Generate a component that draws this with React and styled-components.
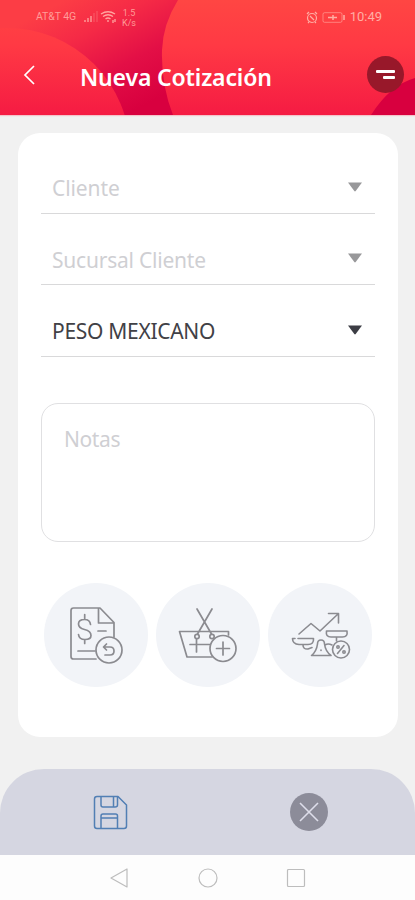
import React from "react";
import styled, { createGlobalStyle } from "styled-components";

const GlobalStyle = createGlobalStyle`
  * { box-sizing: border-box; }
  body { margin: 0; background: #f1f1f1; font-family: "Noto Sans", "Open Sans", sans-serif; }
  button { border: 0; padding: 0; background: none; font: inherit; }
  svg { display: block; flex: none; }
`;

const Screen = styled.main`
  width: 415px;
  height: 900px;
  display: flex;
  flex-direction: column;
  background: #f1f1f1;
  overflow: hidden;
`;

const Header = styled.header`
  position: relative;
  height: 115px;
  flex: none;
  overflow: hidden;
  box-shadow: 0 1px 1px #f3c4ca;
`;

const HeaderArt = styled.svg`
  position: absolute;
  inset: 0;
`;

const StatusBar = styled.div`
  position: relative;
  height: 34px;
  padding: 0 33px 0 36px;
  display: flex;
  align-items: center;
  color: #ff9c98;
  font: 11px/34px Roboto, sans-serif;
`;

const Carrier = styled.span`
  width: 48px;
  font-size: 10.5px;
  letter-spacing: -0.1px;
  white-space: nowrap;
`;

const Speed = styled.span`
  margin-left: 2px;
  font-size: 9px;
  line-height: 10px;
  text-align: center;
  padding-top: 1px;
`;

const StatusRight = styled.div`
  margin-left: auto;
  display: flex;
  align-items: center;
  gap: 4px;
  font-size: 13px;
  color: #ffaea4;
`;

const TitleBar = styled.div`
  position: relative;
  height: 81px;
  padding: 0 11px 0 22px;
  display: flex;
  align-items: center;
`;

const Title = styled.h1`
  margin: 5px 0 0 42px;
  color: #fff;
  font-size: 23px;
  line-height: 30px;
  font-weight: 600;
  letter-spacing: -0.15px;
  white-space: nowrap;
`;

const MenuButton = styled.button`
  width: 37px;
  height: 37px;
  margin-left: auto;
  border-radius: 50%;
  background: #98182a;
  display: grid;
  place-items: center;
`;

const Card = styled.section`
  width: 380px;
  height: 604px;
  margin: 18px 0 0 18px;
  padding: 9px 23px 0;
  border-radius: 22px;
  background: #fff;
  flex: none;
`;

const SelectField = styled.div`
  height: 71.5px;
  padding: 22px 12px 0 11px;
  border-bottom: 1px solid #d9d9da;
  display: flex;
  align-items: center;
  justify-content: space-between;
  color: ${(p) => (p.$filled ? "#414146" : "#cfcfd3")};
  font-size: 21px;
  line-height: 28px;
  letter-spacing: ${(p) => p.$tracking || "0px"};
`;

const Caret = styled.svg`
  margin-top: -3px;
  fill: ${(p) => (p.$filled ? "#3c3d44" : "#98989a")};
`;

const Notes = styled.div`
  height: 139px;
  margin-top: 46px;
  padding: 21px 22px;
  border: 1.5px solid #e0e0e2;
  border-radius: 17px;
  color: #cfcfd3;
  font-size: 21px;
  line-height: 28px;
  letter-spacing: -0.4px;
`;

const Actions = styled.div`
  margin: 41px 3px 0;
  display: flex;
  justify-content: space-between;
`;

const ActionButton = styled.button`
  width: 104px;
  height: 104px;
  border-radius: 50%;
  background: #f2f4f8;
`;

const ActionArt = styled.svg`
  fill: none;
  stroke: #8b8b90;
  stroke-width: ${(p) => p.$weight || 1.7};
  stroke-linejoin: round;
  stroke-linecap: round;
`;

const Footer = styled.footer`
  height: 86px;
  margin-top: 32px;
  padding: 0 87px 0 93px;
  border-radius: 44px 44px 0 0;
  background: #d5d6e1;
  display: flex;
  align-items: center;
  justify-content: space-between;
  flex: none;
`;

const CancelButton = styled.button`
  width: 38px;
  height: 38px;
  border-radius: 50%;
  background: #8c8c99;
  display: grid;
  place-items: center;
`;

const SystemNav = styled.nav`
  height: 46px;
  padding: 0 109px;
  display: flex;
  align-items: center;
  justify-content: space-between;
  background: #fdfdfd;
`;

const NavGlyph = styled.svg`
  fill: none;
  stroke: #bdbdbd;
  stroke-width: 1.2;
  stroke-linejoin: round;
`;

const fields = [
  { label: "Cliente", tracking: "-0.1px" },
  { label: "Sucursal Cliente", tracking: "-0.22px" },
  { label: "PESO MEXICANO", filled: true, tracking: "-0.3px" },
];

function Decoration() {
  return (
    <HeaderArt width="415" height="115" viewBox="0 0 415 115">
      <defs>
        <linearGradient id="base" gradientUnits="userSpaceOnUse" x1="65" y1="0" x2="125" y2="115">
          <stop offset="0" stopColor="#fc3d45" />
          <stop offset=".3" stopColor="#f52a46" />
          <stop offset=".65" stopColor="#e30f46" />
          <stop offset="1" stopColor="#d8003f" />
        </linearGradient>
        <linearGradient id="bubble" gradientUnits="userSpaceOnUse" x1="0" y1="0" x2="0" y2="115">
          <stop offset="0" stopColor="#ff4643" />
          <stop offset=".4" stopColor="#ff3944" />
          <stop offset="1" stopColor="#f51b43" />
        </linearGradient>
      </defs>
      <path d="M0 0H415V115H0Z" fill="url(#base)" />
      <circle cx="7" cy="151" r="123" fill="url(#bubble)" />
      <path d="M178 0Q163 24 162 50Q161 85 173 115H371Q390 85 415 78V0Z" fill="url(#bubble)" />
    </HeaderArt>
  );
}

function Signal() {
  return (
    <svg width="36" height="14" viewBox="0 0 36 14" fill="none" stroke="#ffa6a0" strokeWidth="1.3">
      <path d="M1 12v-2M4 12V8M7 12V6" />
      <path d="M10 12V3M13 12V1" opacity=".3" />
      <path d="M17 4Q24-.5 31 4M19 6.5Q24 3 29 6.5M21.5 9Q24 7 26.500 9M24 10v2M29 10v3M31 9v3" />
    </svg>
  );
}

function InvoiceIcon() {
  return (
    <ActionArt width="104" height="104" viewBox="44 583 104 104">
      <path d="M96 659H73.500Q71 659 71 656.500V610.500Q71 608 73.500 608H100L114 622.500V637M98.500 608V623H114M98 631H106M78 651H95" />
      <path d="M90.500 624.500Q90 619.500 84.500 619.500Q78.500 619.500 78.500 624Q78.500 628 84.500 629.500Q91 631 91 635.500Q91 639.500 85 639.500Q79 639.500 78.500 634.500M84.700 614.500V619.500M84.700 639.500V643.500" />
      <circle cx="109" cy="650" r="13" fill="#f2f4f8" />
      <path d="M106.500 644L103.500 647L106.500 650M104 647H110Q114 647 114 651Q114 655 110 655H105" />
    </ActionArt>
  );
}

function BasketIcon() {
  return (
    <ActionArt width="104" height="104" viewBox="156 583 104 104">
      <path d="M212 657H187L179.500 631.500H228.500V635M197 609L211.500 634M212 609L197.500 634" />
      <circle cx="197" cy="636.500" r="2.2" />
      <circle cx="212" cy="636.500" r="2.2" />
      <path d="M190 644.500H210M196.500 639V652" />
      <circle cx="223" cy="648.500" r="13" fill="#f2f4f8" />
      <path d="M216.500 648.500H229.500M223 642V655" />
    </ActionArt>
  );
}

function BalanceIcon() {
  return (
    <ActionArt $weight={1.6} width="104" height="104" viewBox="267 583 104 104">
      <path d="M298 634L310 623.500L319 631L337 614M327.500 613.500H337.500V623" />
      <path d="M297 638.500H312.500Q313 644.500 307 644.500H298Q291.500 644 291.500 638.500H294M302 645Q302 649.500 307 649L311 647.500" />
      <path d="M325.500 631H346Q347 637 341.500 637H330Q324.500 637 325.500 631ZM335.500 637V641" />
      <path d="M310.500 655.500Q315.500 651.500 316.500 644Q316.500 640 320 640Q323.500 640 323.500 644Q324.500 651.500 330 655.500ZM324 645Q327 643 331 645M320 650V650.500" />
      <circle cx="340" cy="649.500" r="8.5" fill="#f2f4f8" />
      <path d="M343 645.500L336.500 653.500" />
      <circle cx="337" cy="647" r="1.2" />
      <circle cx="343" cy="652" r="1.2" />
    </ActionArt>
  );
}

export default function App() {
  return (
    <Screen>
      <GlobalStyle />
      <Header>
        <Decoration />
        <StatusBar>
          <Carrier>AT&amp;T 4G</Carrier>
          <Signal />
          <Speed>1.5<br />K/s</Speed>
          <StatusRight>
            <svg width="12" height="13" viewBox="0 0 12 13" fill="none" stroke="currentColor" strokeWidth="1.2">
              <circle cx="6" cy="7" r="4.5" />
              <path d="M1 3L3 1M9 1L11 3M4 5L6 7L8 9M2 12L3 11M10 12L9 11" />
            </svg>
            <svg width="24" height="11" viewBox="0 0 24 11" fill="none" stroke="currentColor">
              <rect x="1" y=".7" width="19" height="9.600" rx="1.5" opacity=".6" />
              <path d="M22 3V8" strokeWidth="1.5" />
              <path d="M6 5.500H15M11 3V8" strokeWidth="1.5" />
            </svg>
            10:49
          </StatusRight>
        </StatusBar>
        <TitleBar>
          <svg width="16" height="22" viewBox="0 0 16 22" fill="none" stroke="#fff" strokeWidth="1.7">
            <path d="M12 2L3 11L12 20" />
          </svg>
          <Title>Nueva Cotización</Title>
          <MenuButton aria-label="Menú">
            <svg width="20" height="10" viewBox="0 0 20 10" fill="#fff">
              <rect x="0" y="0" width="19" height="3" rx="1" />
              <rect x="7" y="6" width="12" height="3" rx="1" />
            </svg>
          </MenuButton>
        </TitleBar>
      </Header>
      <Card>
        {fields.map((f) => (
          <SelectField key={f.label} $filled={f.filled} $tracking={f.tracking}>
            {f.label}
            <Caret $filled={f.filled} width="16" height="10" viewBox="0 0 16 10">
              <path d="M1 .5H15L8.700 9Q8 9.800 7.300 9Z" />
            </Caret>
          </SelectField>
        ))}
        <Notes>Notas</Notes>
        <Actions>
          <ActionButton aria-label="Factura"><InvoiceIcon /></ActionButton>
          <ActionButton aria-label="Agregar"><BasketIcon /></ActionButton>
          <ActionButton aria-label="Balance"><BalanceIcon /></ActionButton>
        </Actions>
      </Card>
      <Footer>
        <svg width="35" height="35" viewBox="0 0 35 35" fill="none" stroke="#527fb4" strokeWidth="1.5" strokeLinejoin="round">
          <path d="M4 1.500H25L33.500 10V31Q33.500 33.500 31 33.500H4Q1.500 33.500 1.500 31V4Q1.500 1.500 4 1.500Z" />
          <path d="M8 1.500V10Q8 12 10 12H22Q24.500 12 24.500 10V1.500M20.500 2V11.500M8 33.500V21Q8 19 10 19H22.500Q24.500 19 24.500 21V33.500M8 23H24.500" />
        </svg>
        <CancelButton aria-label="Cancelar">
          <svg width="20" height="20" viewBox="0 0 20 20" stroke="#dedeea" strokeWidth="1.6">
            <path d="M1 1L19 19M19 1L1 19" />
          </svg>
        </CancelButton>
      </Footer>
      <SystemNav>
        <NavGlyph width="20" height="20" viewBox="0 0 20 20"><path d="M18 1V19L2 10Z" /></NavGlyph>
        <NavGlyph width="20" height="20" viewBox="0 0 20 20"><circle cx="10" cy="10" r="9" /></NavGlyph>
        <NavGlyph width="20" height="20" viewBox="0 0 20 20"><rect x="1.500" y="1.500" width="17" height="17" rx="1" /></NavGlyph>
      </SystemNav>
    </Screen>
  );
}
